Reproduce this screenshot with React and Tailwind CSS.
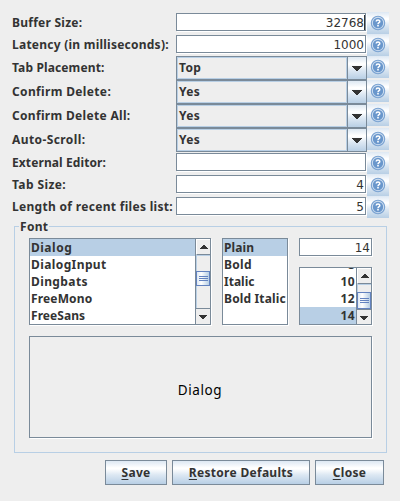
import React from "react";

const BASE = "font-['Noto_Sans','Open_Sans',sans-serif] font-bold text-[12px] text-[#333333] whitespace-nowrap";
const BOLD = `${BASE} leading-[17px]`;
const PLAIN = "font-['DejaVu_Sans',sans-serif] text-[12px] leading-[18px] text-[#333333] whitespace-nowrap";
const GRADIENT = "bg-[linear-gradient(180deg,#dde8f3_0%,#ffffff_30%,#ffffff_34%,#dde8f3_60%,#b8cfe5_100%)]";
const ETCHED = "border border-[#7a8a99] shadow-[1px_1px_0_0_#ffffff]";

const rows = [
  { label: "Buffer Size:", value: "32768", caret: true, track: "tracking-[0.25px]" },
  { label: "Latency (in milliseconds):", value: "1000", track: "tracking-[0.24px]" },
  { label: "Tab Placement:", value: "Top", combo: true, track: "tracking-[0.13px]" },
  { label: "Confirm Delete:", value: "Yes", combo: true, track: "tracking-[0.35px]" },
  { label: "Confirm Delete All:", value: "Yes", combo: true, track: "tracking-[0.32px]" },
  { label: "Auto-Scroll:", value: "Yes", combo: true, track: "tracking-[0.4px]" },
  { label: "External Editor:", value: "", track: "tracking-[0.1px]" },
  { label: "Tab Size:", value: "4", track: "tracking-[0.4px]" },
  { label: "Length of recent files list:", value: "5", track: "tracking-[0.31px]" },
];

function HelpButton() {
  return (
    <button aria-label="Help" className={`flex h-[22px] w-[22px] shrink-0 items-center justify-center ${GRADIENT}`}>
      <svg width="16" height="16" viewBox="0 0 16 16">
        <circle cx="8" cy="8" r="6.7" fill="#d3e2f2" stroke="#7ba3d2" strokeWidth="1.1" />
        <circle cx="8" cy="8" r="5.2" fill="#6a97cc" />
        <path d="M6.2 6.6C6.2 4.6 9.8 4.6 9.8 6.5C9.8 7.7 8 7.6 8 9.2" fill="none" stroke="#fff" strokeWidth="1.5" />
        <rect x="7.2" y="10" width="1.6" height="1.5" fill="#fff" />
      </svg>
    </button>
  );
}

function Combo({ value }) {
  return (
    <div className="flex h-6 w-[191px] border border-[#7a8a99]">
      <div className="flex-1 border border-[#b8cfe5] pl-px pt-px">
        <div className={`${BOLD} tracking-[0.3px]`}>{value}</div>
      </div>
      <div className={`flex w-[19px] items-center justify-center border-l border-[#7a8a99] ${GRADIENT}`}>
        <svg width="10" height="5" viewBox="0 0 10 5" shapeRendering="crispEdges">
          <path d="M0 0h10v1h-1v1h-1v1h-1v1h-1v1h-2v-1h-1v-1h-1v-1h-1v-1h-1z" fill="#333333" />
        </svg>
      </div>
    </div>
  );
}

function Field({ value, caret }) {
  return (
    <div className={`mt-px flex h-[18px] w-[190px] justify-end bg-white ${ETCHED} ${caret ? "" : "pr-px"}`}>
      <span className={PLAIN}>{value}</span>
      {caret && <span className="mt-px h-[15px] w-px bg-[#333333]" />}
    </div>
  );
}

function Row({ label, value, combo, caret, track }) {
  return (
    <div className={`flex ${combo ? "h-6" : "h-[22px]"}`}>
      <div className={`w-[164px] shrink-0 ${combo ? "pt-[3px]" : "pt-[2px]"}`}>
        <div className={`${BOLD} ${track}`}>{label}</div>
      </div>
      <div className="w-[191px] shrink-0">
        {combo ? <Combo value={value} /> : <Field value={value} caret={caret} />}
      </div>
      <HelpButton />
    </div>
  );
}

function Arrow({ down }) {
  return (
    <svg width="8" height="4" viewBox="0 0 8 4" shapeRendering="crispEdges" className={down ? "rotate-180" : ""}>
      <path d="M3 0h2v1h1v1h1v1h1v1h-8v-1h1v-1h1v-1h1z" fill="#333333" />
    </svg>
  );
}

function Scrollbar({ before, thumb }) {
  return (
    <div className="flex w-[15px] shrink-0 flex-col border-l border-[#7a8a99] bg-[#eeeeee]">
      <div className="flex h-4 shrink-0 items-center justify-center border-b border-[#7a8a99] border-l border-t border-l-white border-t-white">
        <Arrow />
      </div>
      <div className="flex flex-1 flex-col border-l border-t border-[#b8cfe5]">
        <div className={before} />
        <div className={`-ml-px flex shrink-0 flex-col items-center justify-center gap-px border border-[#6382bf] bg-[linear-gradient(90deg,#dde8f3_0%,#ffffff_35%,#b8cfe5_100%)] ${thumb}`}>
          <div className="h-px w-[9px] bg-[#6382bf]" />
          <div className="h-px w-[9px] bg-[#6382bf]" />
          <div className="h-px w-[9px] bg-[#6382bf]" />
        </div>
      </div>
      <div className="flex h-4 shrink-0 items-center justify-center border-t border-[#7a8a99]">
        <Arrow down />
      </div>
    </div>
  );
}

function Item({ children, selected, right, track = "tracking-[0.35px]" }) {
  return (
    <div className={`${BOLD} ${track} h-[17px] shrink-0 ${right ? "pr-px text-right" : "pl-px"} ${selected ? "bg-[#b8cfe5]" : ""}`}>{children}</div>
  );
}

function Button({ first, rest, size }) {
  return (
    <button className={`flex h-[25px] items-center justify-center border border-[#7a8a99] ${GRADIENT} ${size}`}>
      <span className={`${BOLD} tracking-[0.3px]`}>
        <span className="underline decoration-1 underline-offset-2">{first}</span>
        {rest}
      </span>
    </button>
  );
}

export default function App() {
  return (
    <div className="h-[501px] w-[400px] overflow-hidden bg-[#eeeeee] pt-3">
      <div className="pl-3">
        {rows.map((r) => (
          <Row key={r.label} {...r} />
        ))}
      </div>

      <fieldset className="relative ml-[14px] mt-[8px] h-[227px] w-[373px] border border-[#b8cfe5] pl-[14px] pt-[11px]">
        <legend className={`${BOLD} absolute -top-[9px] left-[4px] bg-[#eeeeee] px-px tracking-[0.3px]`}>Font</legend>
        <div className="flex">
          <div className={`flex h-[87px] w-[182px] bg-white ${ETCHED}`}>
            <div className="flex-1 overflow-hidden">
              <Item selected track="tracking-[0.5px]">Dialog</Item>
              <Item track="tracking-[0.4px]">DialogInput</Item>
              <Item track="tracking-[0.4px]">Dingbats</Item>
              <Item track="tracking-[0.15px]">FreeMono</Item>
              <Item track="tracking-[0.05px]">FreeSans</Item>
            </div>
            <Scrollbar before="h-[15px]" thumb="h-[15px]" />
          </div>
          <div className={`ml-[11px] h-[87px] w-[66px] bg-white ${ETCHED}`}>
            <Item selected track="tracking-[0.1px]">Plain</Item>
            <Item track="tracking-[0.3px]">Bold</Item>
            <Item track="tracking-[0px]">Italic</Item>
            <Item track="tracking-[0.15px]">Bold Italic</Item>
          </div>
          <div className="ml-[11px] flex flex-col gap-[11px]">
            <div className={`h-[18px] w-[73px] bg-white pr-px text-right ${ETCHED} ${PLAIN}`}>14</div>
            <div className={`flex h-[58px] w-[73px] bg-white ${ETCHED}`}>
              <div className="flex flex-1 flex-col justify-end overflow-hidden">
                <Item right>8</Item>
                <Item right>10</Item>
                <Item right>12</Item>
                <Item right selected>14</Item>
              </div>
              <Scrollbar before="h-[7px]" thumb="h-[17px]" />
            </div>
          </div>
        </div>
        <div className={`mt-[11px] flex h-[102px] w-[343px] items-center justify-center pr-px pt-[6px] ${ETCHED}`}>
          <span className="font-['Noto_Sans',sans-serif] text-[13.5px] leading-4 tracking-[0.6px] text-black">Dialog</span>
        </div>
      </fieldset>

      <div className="ml-[105px] mt-[7px] flex gap-[5px]">
        <Button first="S" rest="ave" size="w-[62px]" />
        <Button first="R" rest="estore Defaults" size="w-[138px]" />
        <Button first="C" rest="lose" size="w-[69px]" />
      </div>
    </div>
  );
}
